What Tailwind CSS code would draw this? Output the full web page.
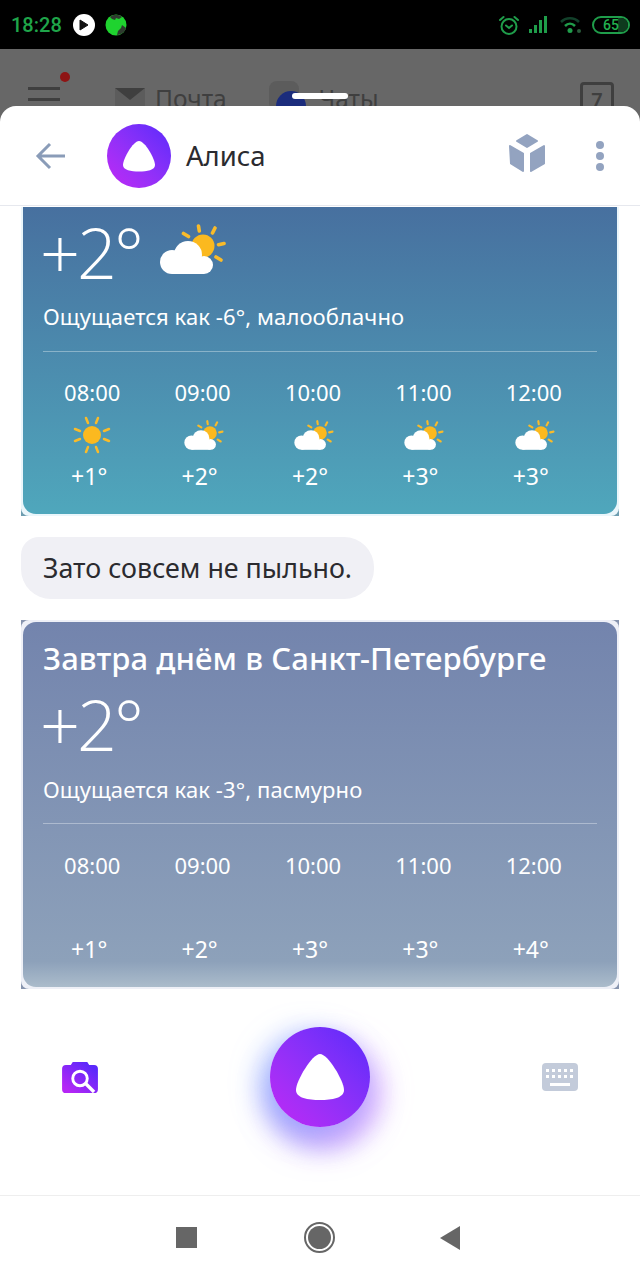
<!DOCTYPE html>
<html lang="ru">
<head>
    <meta charset="UTF-8">
    <meta name="viewport" content="width=device-width, initial-scale=1.0">
    <title>Алиса</title>
    <script src="https://cdn.jsdelivr.net/npm/@tailwindcss/browser@4"></script>
</head>
<body class="bg-white">
    <svg class="absolute" width="0" height="0">
        <defs>
            <linearGradient id="aliceGrad" x1="0.15" y1="0.9" x2="0.85" y2="0.15">
                <stop offset="0" stop-color="#b526f5"/>
                <stop offset="1" stop-color="#5a28fb"/>
            </linearGradient>
            <symbol id="partly" viewBox="0 0 66 52">
                <g stroke="#f9bb2a" stroke-width="3.600" stroke-linecap="round">
                    <path d="M38.500 2l.8 5M55 4l-2.500 5M64 19.500l-5.500 1.200M61 36l-5-3M23.500 9.500l5 3"/>
                </g>
                <circle cx="43" cy="22" r="11.500" fill="#fbb91f"/>
                <g fill="#ffffff">
                    <circle cx="12" cy="38" r="12"/>
                    <circle cx="28" cy="31" r="14"/>
                    <circle cx="44" cy="41" r="9"/>
                    <rect x="12" y="34" width="32" height="16"/>
                </g>
            </symbol>
        </defs>
    </svg>

    <div class="relative w-[640px] h-[1280px] overflow-hidden flex flex-col font-['Noto_Sans',sans-serif]">
        <!-- status bar -->
        <div class="h-[49px] shrink-0 bg-black flex items-center pl-[11px] pr-[10px]">
            <span class="font-['Roboto',sans-serif] font-medium text-[20px] leading-none text-[#1fa54a]">18:28</span>
            <span class="ml-[11px] w-[22px] h-[22px] rounded-full bg-white flex items-center justify-center">
                <svg width="10" height="12" viewBox="0 0 10 12"><path d="M1 1l8 5-8 5z" fill="#111" stroke="#111" stroke-linejoin="round"/></svg>
            </span>
            <svg class="ml-[10px]" width="22" height="24" viewBox="0 0 22 24">
                <circle cx="11" cy="12" r="10.500" fill="#1fd32f"/>
                <path d="M5 4c3-3 9-3 12 0l-3 2-3-1-1 2-3-1zM21 15c-1 4-5 7-9 7l1-4 3-3 1-3z" fill="#2f3a2f"/>
            </svg>
            <div class="ml-auto flex items-center">
                <svg width="22" height="24" viewBox="0 0 22 24" fill="none" stroke="#1f9d4a" stroke-width="2">
                    <circle cx="11" cy="13.500" r="7.500"/>
                    <path d="M8 12.500l3 2.500 3-2.500M2 7l3.500-3M20 7l-3.500-3" stroke-linecap="round"/>
                </svg>
                <svg class="ml-[8px]" width="20" height="20" viewBox="0 0 20 20" fill="#1f9d4a">
                    <path d="M1 14h3v4H1zM6 10h3v8H6zM11 5h3v13h-3zM16 1h3v17h-3z"/>
                </svg>
                <svg class="ml-[11px]" width="24" height="20" viewBox="0 0 24 20" fill="none">
                    <path d="M2 7c5-5 13-5 18 0" stroke="#12402a" stroke-width="2.500"/>
                    <path d="M6 11c3-3 7-3 10 0" stroke="#1f9d4a" stroke-width="2.500"/>
                    <circle cx="11" cy="15.500" r="2.500" fill="#1f9d4a"/>
                    <circle cx="20" cy="16" r="2" fill="#2a5a3a"/>
                </svg>
                <div class="relative ml-[9px] w-[38px] h-[18px] rounded-full border-2 border-[#1f9d4a] overflow-hidden flex items-center justify-center">
                    <div class="absolute right-0 top-0 bottom-0 w-[10px] bg-[#0e3a1e]"></div>
                    <span class="relative font-['Roboto',sans-serif] font-medium text-[14px] leading-none text-[#22b04f]">65</span>
                </div>
            </div>
        </div>

        <!-- dimmed page behind the sheet -->
        <div class="h-[73px] shrink-0 bg-[#676767] flex items-start overflow-hidden">
            <div class="relative ml-[28px] mt-[38px] w-[32px] flex flex-col gap-[8px]">
                <div class="h-[3px] bg-[#3f3f3f]"></div>
                <div class="h-[3px] bg-[#3f3f3f]"></div>
                <div class="absolute -top-[15px] right-[-10px] w-[10px] h-[10px] rounded-full bg-[#8e1414]"></div>
            </div>
            <div class="ml-[55px] mt-[39px] w-[30px] h-[24px] bg-[#5c5c5c] overflow-hidden">
                <svg width="30" height="12" viewBox="0 0 30 12"><path d="M0 0h30L15 12z" fill="#3f3f3f"/></svg>
            </div>
            <span class="ml-[10px] mt-[32px] text-[24.500px] leading-[36px] text-[#3f3f3f]">Почта</span>
            <div class="relative ml-[42px] mt-[32px] w-[30px] h-[30px] rounded-lg bg-[#5c5c5c]">
                <div class="absolute left-[7px] top-[10px] w-[30px] h-[30px] rounded-full bg-[#1b2c7c]"></div>
            </div>
            <span class="ml-[20px] mt-[32px] text-[24.500px] leading-[36px] text-[#3f3f3f]">Чаты</span>
            <div class="ml-auto mr-[26px] mt-[33px] w-[34px] h-[40px] border-[3px] border-[#3f3f3f] rounded-sm text-center text-[20px] leading-[30px] font-semibold text-[#3f3f3f]">7</div>
        </div>
        <div class="absolute left-[292px] top-[93px] w-[56px] h-[6px] rounded-full bg-white z-10"></div>

        <!-- sheet -->
        <div class="relative flex-1 bg-white rounded-t-[16px] -mt-[16px] flex flex-col min-h-0">
            <header class="h-[100px] shrink-0 border-b border-[#e6e8ee] flex items-center pl-[35px] pr-[36px]">
                <svg width="30" height="28" viewBox="0 0 30 28" fill="none" stroke="#8a9cb8" stroke-width="3">
                    <path d="M30 14H3M15 2L3 14l12 12"/>
                </svg>
                <div class="ml-[42px] w-[64px] h-[64px] rounded-full bg-linear-to-tr from-[#c026f5] to-[#5a28fb] flex items-center justify-center">
                    <svg width="34" height="32" viewBox="0 0 34 32"><path d="M17 1C11 1 1 19 1 25c0 5 8 6.500 16 6.500S33 30 33 25C33 19 23 1 17 1z" fill="#fff"/></svg>
                </div>
                <span class="ml-[15px] text-[27.500px] leading-none text-[#2b2b2f]">Алиса</span>
                <svg class="ml-auto -mt-[5px]" width="38" height="40" viewBox="0 0 38 40" fill="#93a3c0" stroke="#93a3c0" stroke-width="2" stroke-linejoin="round">
                    <path d="M19 2l10 6-10 6L9 8zM2 13l13 7.500V38L3 30.500zM36 13v17.500L23 38V20.500z"/>
                </svg>
                <div class="ml-[50px] flex flex-col gap-[3px]">
                    <div class="w-[8px] h-[8px] rounded-full bg-[#93a3c0]"></div>
                    <div class="w-[8px] h-[8px] rounded-full bg-[#93a3c0]"></div>
                    <div class="w-[8px] h-[8px] rounded-full bg-[#93a3c0]"></div>
                </div>
            </header>

            <main class="flex-1 min-h-0 flex flex-col pl-[21px] pr-[21px] pt-px">
                <!-- today card, scrolled under the header -->
                <div class="bg-[#6d9db0]">
                    <div class="bg-[#eaf6fb] px-[2px] pb-[2px] rounded-b-[8px]">
                        <div class="h-[307px] rounded-b-[13px] bg-linear-to-b from-[#47709f] to-[#4fa7bc] pl-[20px] pr-[20px] text-white">
                            <div class="pt-[9px] h-[81px] flex items-center">
                                <span class="-ml-[3px] font-['Open_Sans',sans-serif] font-light text-[70px] leading-none tracking-[-3px]">+2°</span>
                                <svg class="ml-[19px] -mt-[4px]" width="66" height="52"><use href="#partly"/></svg>
                            </div>
                            <div class="mt-[12px] h-[32px] flex items-center text-[22px] tracking-[0.1px] leading-none">Ощущается как -6°, малооблачно</div>
                            <div class="mt-[19px] h-px w-[554px] bg-white/35"></div>
                            <div class="-ml-[6px] mt-[25px] w-[552px] grid grid-cols-5 text-center">
                                <div class="h-[30px] text-[22px] leading-[30px]">08:00</div>
                                <div class="h-[30px] text-[22px] leading-[30px]">09:00</div>
                                <div class="h-[30px] text-[22px] leading-[30px]">10:00</div>
                                <div class="h-[30px] text-[22px] leading-[30px]">11:00</div>
                                <div class="h-[30px] text-[22px] leading-[30px]">12:00</div>

                                <div class="mt-[6px] h-[44px] flex items-center justify-center">
                                    <svg width="40" height="40" viewBox="0 0 40 40">
                                        <circle cx="20" cy="20" r="9" fill="#fbb91f"/>
                                        <path d="M14 3l2 5M26 3l-2 5M3 14l5 2M37 14l-5 2M3 26l5-2M37 26l-5-2M14 37l2-5M26 37l-2-5" stroke="#f9bb2a" stroke-width="2.500" stroke-linecap="round"/>
                                    </svg>
                                </div>
                                <div class="mt-[6px] h-[44px] flex items-center justify-center"><svg class="ml-[2px]" width="40" height="31"><use href="#partly"/></svg></div>
                                <div class="mt-[6px] h-[44px] flex items-center justify-center"><svg class="ml-[2px]" width="40" height="31"><use href="#partly"/></svg></div>
                                <div class="mt-[6px] h-[44px] flex items-center justify-center"><svg class="ml-[2px]" width="40" height="31"><use href="#partly"/></svg></div>
                                <div class="mt-[6px] h-[44px] flex items-center justify-center"><svg class="ml-[2px]" width="40" height="31"><use href="#partly"/></svg></div>

                                <div class="mt-[4px] h-[30px] pr-[6px] text-[23px] leading-[30px]">+1°</div>
                                <div class="mt-[4px] h-[30px] pr-[6px] text-[23px] leading-[30px]">+2°</div>
                                <div class="mt-[4px] h-[30px] pr-[6px] text-[23px] leading-[30px]">+2°</div>
                                <div class="mt-[4px] h-[30px] pr-[6px] text-[23px] leading-[30px]">+3°</div>
                                <div class="mt-[4px] h-[30px] pr-[6px] text-[23px] leading-[30px]">+3°</div>
                            </div>
                        </div>
                    </div>
                </div>

                <div class="mt-[21px] w-[353px] h-[62px] rounded-[30px] rounded-tl-[18px] bg-[#f0f0f5] flex items-center pl-[22px] text-[26.800px] leading-none text-[#2b2b2f]">Зато совсем не пыльно.</div>

                <!-- tomorrow card -->
                <div class="mt-[21px] bg-[#8794ae]">
                    <div class="bg-[#eef0f7] p-[2px] rounded-[8px]">
                        <div class="h-[365px] rounded-[13px] bg-linear-to-b from-[#7384ad] via-[#8da1ba] via-93% to-[#abbccb] pl-[20px] pr-[20px] text-white">
                            <div class="pt-[16px] h-[56px] flex items-center text-[31px] tracking-[0.1px] leading-none font-medium">Завтра днём в Санкт-Петербурге</div>
                            <div class="h-[72px] mt-[10px] flex items-center">
                                <span class="-ml-[3px] font-['Open_Sans',sans-serif] font-light text-[70px] leading-none tracking-[-3px]">+2°</span>
                            </div>
                            <div class="mt-[13px] h-[32px] flex items-center text-[22px] tracking-[0.1px] leading-none">Ощущается как -3°, пасмурно</div>
                            <div class="mt-[18px] h-px w-[554px] bg-white/35"></div>
                            <div class="-ml-[6px] mt-[26px] w-[552px] grid grid-cols-5 text-center">
                                <div class="h-[30px] text-[22px] leading-[30px]">08:00</div>
                                <div class="h-[30px] text-[22px] leading-[30px]">09:00</div>
                                <div class="h-[30px] text-[22px] leading-[30px]">10:00</div>
                                <div class="h-[30px] text-[22px] leading-[30px]">11:00</div>
                                <div class="h-[30px] text-[22px] leading-[30px]">12:00</div>

                                <div class="mt-[54px] h-[30px] pr-[6px] text-[23px] leading-[30px]">+1°</div>
                                <div class="mt-[54px] h-[30px] pr-[6px] text-[23px] leading-[30px]">+2°</div>
                                <div class="mt-[54px] h-[30px] pr-[6px] text-[23px] leading-[30px]">+3°</div>
                                <div class="mt-[54px] h-[30px] pr-[6px] text-[23px] leading-[30px]">+3°</div>
                                <div class="mt-[54px] h-[30px] pr-[6px] text-[23px] leading-[30px]">+4°</div>
                            </div>
                        </div>
                    </div>
                </div>

                <!-- input bar -->
                <div class="flex-1 flex items-center justify-between pl-[41px] pr-[41px] pb-[30px]">
                    <svg width="36" height="31" viewBox="0 0 37 32">
                        <path d="M4 3h5l2-3h15l2 3h5a4 4 0 0 1 4 4v21a4 4 0 0 1-4 4H4a4 4 0 0 1-4-4V7a4 4 0 0 1 4-4z" fill="url(#aliceGrad)"/>
                        <circle cx="18.500" cy="17" r="7.500" fill="none" stroke="#fff" stroke-width="3"/>
                        <path d="M24 22l9 9" stroke="#fff" stroke-width="3.500"/>
                    </svg>
                    <button type="button" class="w-[100px] h-[100px] rounded-full bg-linear-to-tr from-[#c026f5] to-[#5a28fb] flex items-center justify-center shadow-[-10px_6px_28px_#7fa8ff99,12px_14px_28px_#d9a0ff99,0_20px_30px_#9f7bfabb]">
                        <svg width="50" height="48" viewBox="0 0 50 48"><path d="M25 1C17 1 1 28 1 37c0 8 12 10 24 10s24-2 24-10C49 28 33 1 25 1z" fill="#fff"/></svg>
                    </button>
                    <svg width="36" height="28" viewBox="0 0 36 28">
                        <rect width="36" height="28" rx="4" fill="#c3cbda"/>
                        <path d="M4 6h3v3H4zM10 6h3v3h-3zM16 6h3v3h-3zM22 6h3v3h-3zM28 6h3v3h-3zM4 12h3v3H4zM10 12h3v3h-3zM16 12h3v3h-3zM22 12h3v3h-3zM28 12h3v3h-3zM8 20h20v3H8z" fill="#fff"/>
                    </svg>
                </div>
            </main>

            <!-- android nav -->
            <nav class="h-[85px] shrink-0 border-t border-[#eeeeee] flex items-center justify-center pb-[1px] pr-[5px]">
                <div class="w-[21px] h-[21px] bg-[#666666]"></div>
                <div class="ml-[107px] w-[31px] h-[31px] rounded-full border-2 border-[#666666] flex items-center justify-center">
                    <div class="w-[23px] h-[23px] rounded-full bg-[#666666]"></div>
                </div>
                <svg class="ml-[104px]" width="21" height="24" viewBox="0 0 21 24"><path d="M21 0v24L1 12z" fill="#666666"/></svg>
            </nav>
        </div>
    </div>
</body>
</html>
